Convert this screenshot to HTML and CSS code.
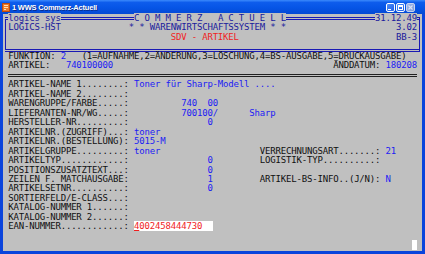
FILE: index.html
```html
<!DOCTYPE html>
<html lang="de">
<head>
  <meta charset="UTF-8">
  <title>1 WWS Commerz-Actuell</title>
  <link rel="stylesheet" href="styles.css">
</head>
<body>
  <div class="window">
    <!-- Title bar -->
    <div class="titlebar">
      <svg class="app-icon" width="8" height="9" viewBox="0 0 8 9">
        <rect x="0.5" y="0.5" width="7" height="8" fill="#f07a28" stroke="#b84a10"/>
        <rect x="2" y="2" width="4" height="1" fill="#ffe0b0"/>
        <rect x="2" y="4" width="4" height="1" fill="#ffe0b0"/>
        <rect x="2" y="6" width="2" height="1" fill="#ffe0b0"/>
      </svg>
      <span class="title">1 WWS Commerz-Actuell</span>
      <div class="controls">
        <span class="btn btn-min"><span class="min-bar"></span></span>
        <span class="btn btn-max"><span class="max-box"></span></span>
        <span class="btn btn-close">
          <svg width="5" height="5" viewBox="0 0 5 5"><path d="M0.5 0.5L4.5 4.5M4.5 0.5L0.5 4.5" stroke="#d8e2f6" stroke-width="1.1"/></svg>
        </span>
      </div>
    </div>

    <!-- Terminal screen 80x25 -->
    <div class="client">
      <div class="head">
        <div class="row"> <span class="bg hd">logics sys</span>              <span class="bg hd">C O M M E R Z   A C T U E L L</span>                 <span class="bg hd">31.12.49</span></div>
        <div class="row"> <span class="hd">LOGICS-HST</span>             <span class="hd">* * WARENWIRTSCHAFTSSYSTEM * *</span>                     <span class="hd">3.02</span></div>
        <div class="row">                                <span class="red">SDV - ARTIKEL</span>                              <span class="hd">BB-3</span></div>
        <div class="row"></div>
      </div>
      <div class="row"> FUNKTION: <span class="val">2</span>   (1=AUFNAHME,2=ÄNDERUNG,3=LÖSCHUNG,4=BS-AUSGABE,5=DRUCKAUSGABE)</div>
      <div class="row"> ARTIKEL:   <span class="val">740100000</span>                                          ÄNDDATUM: <span class="val">180208</span></div>
      <div class="sep"><span class="sep-line"></span></div>
      <div class="row"> ARTIKEL-NAME 1........: <span class="val">Toner für Sharp-Modell ....</span></div>
      <div class="row"> ARTIKEL-NAME 2........:</div>
      <div class="row"> WARENGRUPPE/FARBE.....:          <span class="val">740  00</span></div>
      <div class="row"> LIEFERANTEN-NR/WG.....:          <span class="val">700100/      Sharp</span></div>
      <div class="row"> HERSTELLER-NR.........:               <span class="val">0</span></div>
      <div class="row"> ARTIKELNR.(ZUGRIFF)...: <span class="val">toner</span></div>
      <div class="row"> ARTIKELNR.(BESTELLUNG): <span class="val">5015-M</span></div>
      <div class="row"> ARTIKELGRUPPE.........: <span class="val">toner</span>                   VERRECHNUNGSART.......: <span class="val">21</span></div>
      <div class="row"> ARTIKELTYP............:               <span class="val">0</span>         LOGISTIK-TYP..........:</div>
      <div class="row"> POSITIONSZUSATZTEXT...:               <span class="val">0</span></div>
      <div class="row"> ZEILEN F. MATCHAUSGABE:               <span class="val">1</span>         ARTIKEL-BS-INFO..(J/N): <span class="val">N</span></div>
      <div class="row"> ARTIKELSETNR..........:               <span class="val">0</span></div>
      <div class="row"> SORTIERFELD/E-CLASS...:</div>
      <div class="row"> KATALOG-NUMMER 1......:</div>
      <div class="row"> KATALOG-NUMMER 2......:</div>
      <div class="row"> EAN-NUMMER............: <span class="field"><span class="cur">4</span>002458444730  </span></div>
      <div class="row"></div>
      <div class="row">                                                                              <span class="block"> </span></div>
    </div>
  </div>
</body>
</html>
```

FILE: styles.css
```css
body {
  margin: 0;
  background: #0a3fd8;
}

.window {
  width: 425px;
  height: 254px;
  display: flex;
  flex-direction: column;
  background: #0b44dc;
}

/* Title bar */
.titlebar {
  height: 14px;
  display: flex;
  align-items: center;
  padding: 0 10px 0 2px;
  background: linear-gradient(to bottom, #3b8afc 0%, #0d5cec 18%, #0655e6 55%, #0449d4 100%);
  color: #ffffff;
}

.app-icon {
  flex: none;
  margin-right: 2px;
}

.title {
  font-family: "Liberation Sans", Arial, sans-serif;
  font-weight: bold;
  font-size: 7.5px;
  letter-spacing: -0.2px;
  text-shadow: 1px 1px 0 #0a2c8c;
  white-space: nowrap;
}

.controls {
  margin-left: auto;
  display: flex;
  gap: 1px;
}

.btn {
  width: 9px;
  height: 9px;
  box-sizing: border-box;
  border: 1px solid #ffffff;
  border-radius: 2px;
  background: linear-gradient(to bottom right, #4f8ff8, #1f5fe8);
  position: relative;
  display: flex;
  align-items: center;
  justify-content: center;
}

.min-bar {
  position: absolute;
  left: 1px;
  bottom: 1px;
  width: 3px;
  height: 1px;
  background: #ffffff;
}

.max-box {
  width: 5px;
  height: 5px;
  box-sizing: border-box;
  border: 1px solid #ffffff;
  border-top-width: 2px;
}

.btn-close {
  border-color: #c8d4f0;
  background: linear-gradient(to bottom right, #a2b8e8, #7d9ada);
}

/* Terminal screen */
.client {
  flex: 1;
  margin: 0 3px 3px 3px;
  background: #c0c0c0;
  font-family: "DejaVu Sans Mono", monospace;
  font-size: 9px;
  letter-spacing: -0.178px;
  line-height: 9.48px;
  color: #101010;
}

.row {
  height: 9.48px;
  white-space: pre;
  position: relative;
  z-index: 1;
}

.head {
  position: relative;
}

.head::before {
  content: "";
  position: absolute;
  left: 2.1px;
  right: 2.1px;
  top: 3.2px;
  height: 28.44px;
  border-top: 3px double #1a1ab4;
  border-bottom: 3px double #1a1ab4;
  border-left: 1px solid #1a1ab4;
  border-right: 1px solid #1a1ab4;
  z-index: 0;
}

.bg {
  background: #c0c0c0;
}

.hd {
  color: #1a1a9c;
}

.red {
  color: #f02424;
}

.val {
  color: #1c1cf4;
}

.sep {
  height: 9.48px;
  display: flex;
  align-items: center;
  padding: 0 5px;
}

.sep-line {
  flex: 1;
  border-top: 3px double #202020;
}

.field {
  background: #ffffff;
  color: #f01e1e;
}

.cur {
  text-decoration: underline;
}

.block {
  background: #ffffff;
}
```
